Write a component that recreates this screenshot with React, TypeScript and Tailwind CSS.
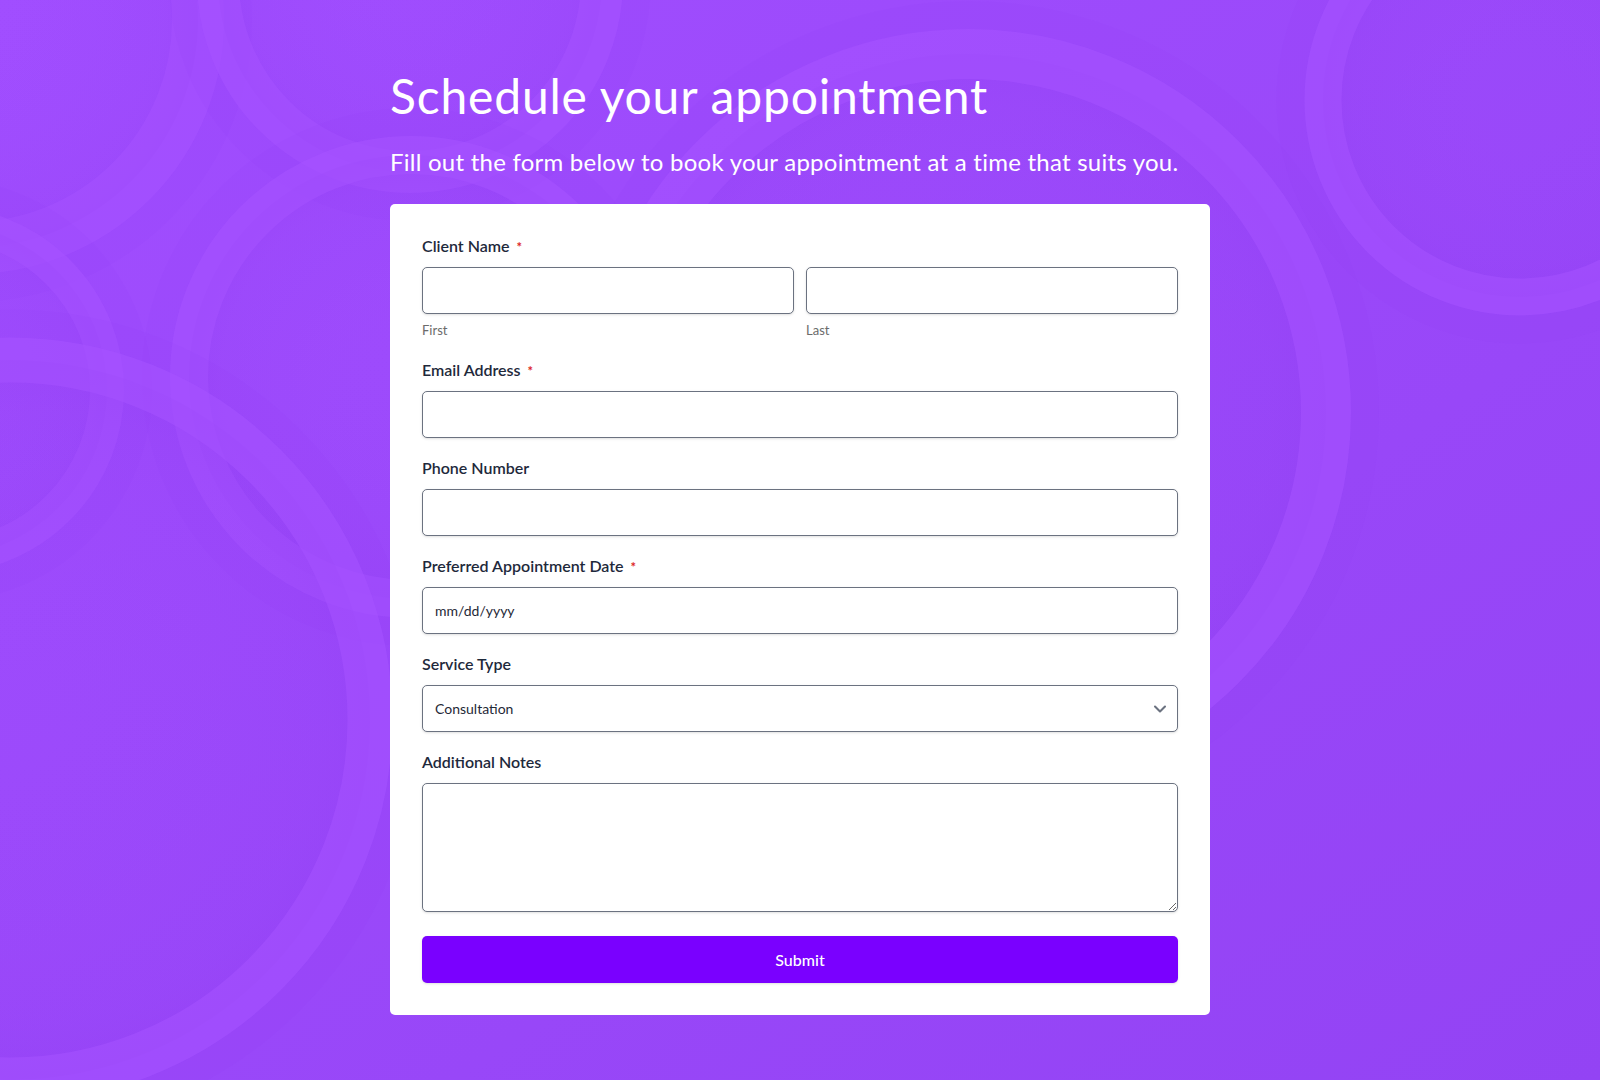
import { ChevronDown } from 'lucide-react';

const RINGS = [
  { cx: -30, cy: 20, r: 228, w: 52 },
  { cx: 410, cy: -20, r: 192, w: 42 },
  { cx: 411, cy: 377, r: 222, w: 38 },
  { cx: -60, cy: 390, r: 167, w: 34 },
  { cx: 10, cy: 720, r: 360, w: 45 },
  { cx: 968, cy: 412, r: 358, w: 50 },
  { cx: 1520, cy: 100, r: 197, w: 37 },
];

function Background() {
  return (
    <svg className="absolute inset-0 h-full w-full" viewBox="0 0 1600 1080" preserveAspectRatio="none">
      <defs>
        <radialGradient id="inner">
          <stop offset="0%" stopColor="#9d4bfd" stopOpacity="0" />
          <stop offset="85%" stopColor="#8f3cf0" stopOpacity="0.14" />
          <stop offset="100%" stopColor="#8a36ec" stopOpacity="0.22" />
        </radialGradient>
      </defs>
      {RINGS.map((c, i) => (
        <g key={i}>
          <circle cx={c.cx} cy={c.cy} r={c.r + c.w / 2 + 14} fill="none" stroke="#8a38ee" strokeOpacity="0.07" strokeWidth={28} />
          <circle cx={c.cx} cy={c.cy} r={c.r} fill="url(#inner)" stroke="#a552ff" strokeOpacity="0.6" strokeWidth={c.w} />
        </g>
      ))}
    </svg>
  );
}

function Label({ text, required }: { text: string; required?: boolean }) {
  return (
    <label className="mb-[9px] block text-[16px] leading-6 font-semibold text-[#1e293b]">
      {text}
      {required && <span className="ml-[7px] text-[13px] leading-none font-bold text-[#dc2626]">*</span>}
    </label>
  );
}

const inputCls =
  'h-[47px] w-full rounded-[5px] border border-[#6b7280] bg-white px-3 text-[14px] text-[#1f2937] shadow-sm outline-none';

export default function App() {
  return (
    <div className="relative min-h-screen overflow-hidden bg-gradient-to-br from-[#a14eff] to-[#9343f4] [font-family:Lato,'Noto_Sans',sans-serif]">
      <Background />

      <div className="relative mx-auto w-[820px] pt-[67px] pb-[64px]">
        <h1 className="text-[48px] leading-[58px] font-normal tracking-[0.017em] text-white">
          Schedule your appointment
        </h1>
        <p className="mt-[22px] text-[24px] leading-[29px] tracking-[0.01em] text-white">
          Fill out the form below to book your appointment at a time that suits you.
        </p>

        <form className="mt-[28px] flex flex-col gap-[18px] rounded-[5px] bg-white px-8 pt-[30px] pb-8">
          <div>
            <Label text="Client Name" required />
            <div className="grid grid-cols-2 gap-3">
              <div>
                <input className={inputCls} />
                <div className="mt-[7px] text-[13px] leading-[19px] text-[#6b6b6b]">First</div>
              </div>
              <div>
                <input className={inputCls} />
                <div className="mt-[7px] text-[13px] leading-[19px] text-[#6b6b6b]">Last</div>
              </div>
            </div>
          </div>

          <div>
            <Label text="Email Address" required />
            <input type="email" className={inputCls} />
          </div>

          <div>
            <Label text="Phone Number" />
            <input type="tel" className={inputCls} />
          </div>

          <div>
            <Label text="Preferred Appointment Date" required />
            <input className={`${inputCls} placeholder:text-[#1f2937]`} placeholder="mm/dd/yyyy" />
          </div>

          <div>
            <Label text="Service Type" />
            <div className="relative">
              <select className={`${inputCls} appearance-none`} defaultValue="Consultation">
                <option>Consultation</option>
                <option>Follow-up</option>
                <option>Treatment</option>
              </select>
              <ChevronDown
                size={20}
                strokeWidth={2.5}
                className="pointer-events-none absolute top-1/2 right-2 -translate-y-1/2 text-[#6b7280]"
              />
            </div>
          </div>

          <div>
            <Label text="Additional Notes" />
            <textarea className="block h-[129px] w-full rounded-[5px] border border-[#6b7280] bg-white px-3 py-2 text-[14px] text-[#1f2937] shadow-sm outline-none" />
          </div>

          <button
            type="button"
            className="mt-[6px] h-[47px] w-full rounded-[5px] bg-[#7a00ff] text-[16px] font-medium text-white shadow-sm"
          >
            Submit
          </button>
        </form>
      </div>
    </div>
  );
}
